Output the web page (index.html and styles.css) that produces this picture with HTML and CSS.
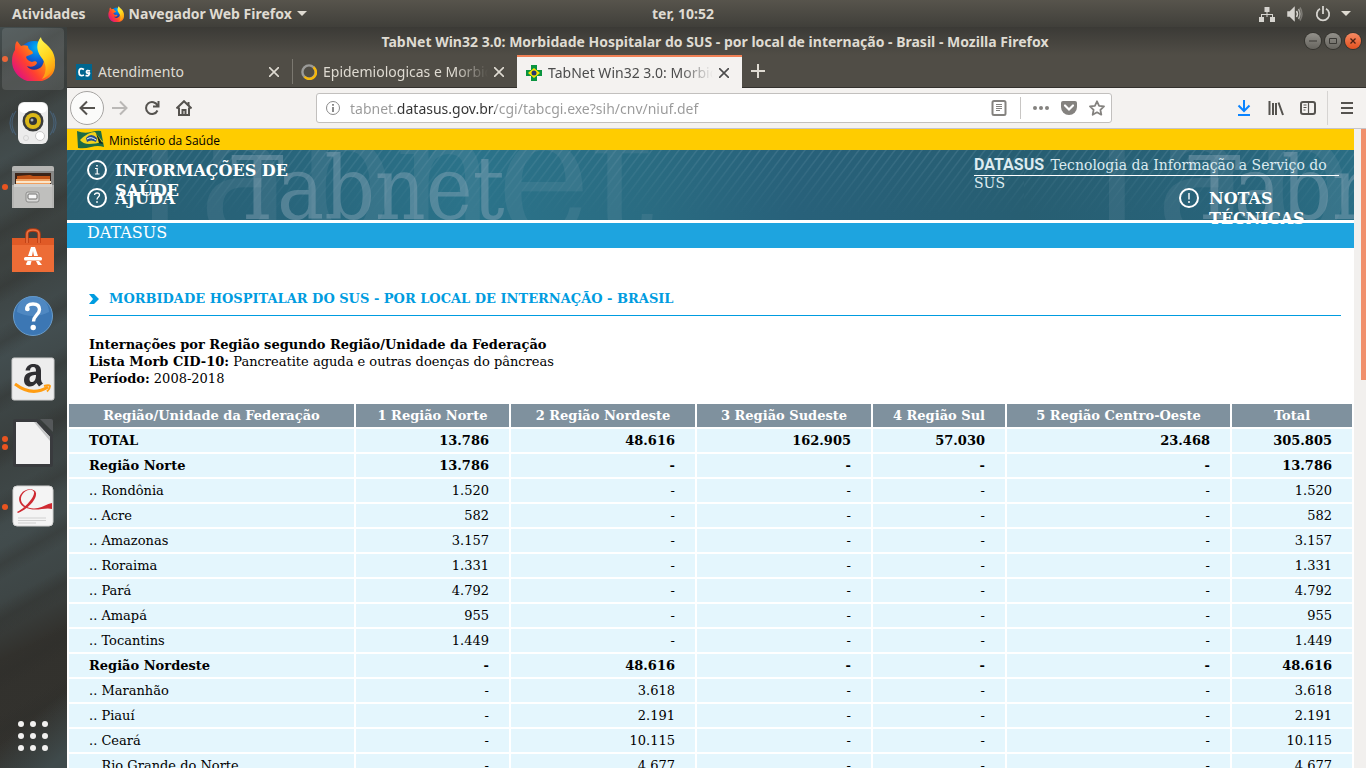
FILE: index.html
```html
<!DOCTYPE html>
<html lang="pt-BR">
<head>
<meta charset="utf-8">
<title>TabNet Win32 3.0: Morbidade Hospitalar do SUS</title>
<link rel="stylesheet" href="styles.css">
</head>
<body>
<svg class="defs" aria-hidden="true">
  <defs>
    <radialGradient id="fxBlue" cx=".6" cy=".2" r=".8"><stop offset="0" stop-color="#00b4f5"/><stop offset=".5" stop-color="#0a62d8"/><stop offset="1" stop-color="#26217c"/></radialGradient>
    <linearGradient id="fxBody" x1="1" y1=".1" x2=".1" y2=".8"><stop offset="0" stop-color="#ffe42e"/><stop offset=".35" stop-color="#ff9a0c"/><stop offset=".7" stop-color="#ff4030"/><stop offset="1" stop-color="#e2147c"/></linearGradient>
    <linearGradient id="fxTail" x1=".3" y1="0" x2=".7" y2="1"><stop offset="0" stop-color="#fff44f"/><stop offset=".5" stop-color="#ffd41c"/><stop offset="1" stop-color="#ff8a10"/></linearGradient>
    <symbol id="firefox" viewBox="0 0 44 44">
      <circle cx="23" cy="20" r="16" fill="url(#fxBlue)"/>
      <path d="M6 4c2 2 3 4 4 5 2-1 5-1 7 0 0 2 1 4 4 5l1 2c-1 2-5 2-7 4 1 3 3 4 6 5 2-1 5-1 5 1-1 3-6 5-10 3 3 5 11 5 15 0 3-5 2-9 0-13 6 2 13 4 13 12 0 11-9 17-21 17S1 36 1 24c0-5 1-8 3-11 0-4 0-7 2-9z" fill="url(#fxBody)"/>
      <path d="M30 0c0 6 13 9 14 23 0 9-5 16-13 19 6-8 4-16-1-22-5-7-5-14 0-20z" fill="url(#fxTail)"/>
    </symbol>
    <symbol id="close" viewBox="0 0 10 10"><path d="M0 0l10 10M10 0L0 10" fill="none" stroke="currentColor" stroke-width="1.6"/></symbol>
  </defs>
</svg>

<header class="topbar">
  <div class="topbar-left">
    <button type="button" class="bar-btn">Atividades</button>
    <button type="button" class="bar-btn"><svg class="i16" viewBox="0 0 44 44"><use href="#firefox"/></svg>Navegador Web Firefox <span class="caret"></span></button>
  </div>
  <button type="button" class="bar-btn clock">ter, 10:52</button>
  <button type="button" class="bar-btn tray" aria-label="Sistema">
    <svg class="i16" viewBox="0 0 16 16" fill="#d6d4cf"><path d="M5.500 1h5v5H8.500v2H14v3h2v5h-5v-5h2V9H8.500v2H7.500V9H3v2h2v5H0v-5h2V8h5.500V6h-2z"/></svg>
    <svg class="i16" viewBox="0 0 16 16" fill="none" stroke="#d6d4cf" stroke-width="1.500"><path d="M1 6h2l4-4v12l-4-4H1z" fill="#d6d4cf"/><path d="M9.500 5q2 3 0 6"/><path d="M11.500 3q3 5 0 10" opacity=".7"/><path d="M13 1.500q4 6.500 0 13" opacity=".35"/></svg>
    <svg class="i16" viewBox="0 0 16 16" fill="none" stroke="#d6d4cf" stroke-width="1.800"><path d="M5 2.700a6.200 6.200 0 1 0 6 0M8 0v8"/></svg>
    <span class="caret"></span>
  </button>
</header>

<div class="desktop">
  <nav class="dock" aria-label="Aplicativos">
    <button type="button" class="app active run" aria-label="Firefox"><svg viewBox="0 0 44 44" width="44" height="44"><use href="#firefox"/></svg></button>
    <button type="button" class="app" aria-label="Rhythmbox"><svg viewBox="0 0 48 48" width="48" height="48">
      <g fill="none" stroke="#4d7196" stroke-width="1.200" opacity=".55"><path d="M7 12q-8 12 0 24M4 14q-6 10 0 20M41 12q8 12 0 24M44 14q6 10 0 20"/></g>
      <rect x="9" y="3" width="30" height="42" rx="6" fill="#ececec"/><rect x="10" y="4" width="28" height="10" rx="5" fill="#fff"/>
      <circle cx="24" cy="22" r="10.500" fill="#3a3c3c"/><circle cx="24" cy="22" r="8" fill="#dcb818"/><circle cx="24" cy="22" r="4" fill="#303238"/><circle cx="23" cy="21" r="1.500" fill="#a9b1b8"/>
      <circle cx="31" cy="37" r="4.500" fill="#fff" stroke="#c9c9c9"/><circle cx="17" cy="39" r="2.500" fill="none" stroke="#d4d4d4"/></svg></button>
    <button type="button" class="app run" aria-label="Arquivos"><svg viewBox="0 0 48 48" width="48" height="48">
      <path d="M5 3h38q2 0 2 2v40H3V5q0-2 2-2z" fill="#b5b5b3"/><path d="M3 8h42v14H3z" fill="#888886"/><path d="M6 10h36v12H6z" fill="#3c2418"/><path d="M8 13l13-1 3 1h17v8H8z" fill="#c05316"/><path d="M7 16h34v6H7z" fill="#f0a060"/><path d="M7 18h35v2H7z" fill="#fbe5c8"/>
      <path d="M5 21h38v24H5z" fill="#bfbfbd"/><path d="M5 21h38v3H5z" fill="#d2d2d0"/><rect x="17" y="29" width="13" height="10" rx="2" fill="#d8d8d7" stroke="#8c8c8a"/><rect x="19" y="31" width="9" height="5" rx="1" fill="#f7f7f7" stroke="#6d6d6b"/></svg></button>
    <button type="button" class="app" aria-label="Programas"><svg viewBox="0 0 48 48" width="48" height="48">
      <path d="M3 11h42v34H3z" fill="#ed6c36"/><path d="M3 11h42v7H3z" fill="#e05a26"/><path d="M18 16V7q0-4 6-4t6 4v9" fill="none" stroke="#b83b12" stroke-width="3.500"/><path d="M18 16V7q0-4 6-4t6 4v9" fill="none" stroke="#ee7746" stroke-width="1.500"/>
      <path d="M22 20h4l3 9h-4l-1-5-1 5h-4zM17 37l1.500-3h4l-1 4h-4zM30 34l3 4h-4l-2-4z" fill="#fff"/><rect x="15" y="30" width="18" height="3.500" rx="1.500" fill="#fff"/></svg></button>
    <button type="button" class="app" aria-label="Ajuda"><svg viewBox="0 0 48 48" width="48" height="48">
      <circle cx="24" cy="25" r="19.500" fill="#3c77b4" stroke="#6b9dcb"/><path d="M8 21a16 16 0 0 1 32 0q-16 8-32 0z" fill="#5c94cc" opacity=".6"/><path d="M18 19q-1-6 6-6 6.500 0 6.500 5.500c0 5-6 6-6 12" fill="none" stroke="#fff" stroke-width="3.400"/><circle cx="18.500" cy="18" r="2.300" fill="#fff"/><circle cx="24.200" cy="36.500" r="2.700" fill="#fff"/></svg></button>
    <button type="button" class="app" aria-label="Amazon"><svg viewBox="0 0 48 48" width="48" height="48">
      <rect x="3" y="3" width="42" height="42" rx="2" fill="#ededed" stroke="#cfcfcf"/><path d="M16.500 15.500c1-5 4.500-6.500 8-6.500 4 0 7.500 2 7.500 6.500v9q0 2 2 4l-4 3-2.500-3.500c-5 6-12.500 4-12.500-3 0-7 6-8 12-8.500 0-3-.5-4.500-3-4.500-2 0-2.800 1.500-3 3.500zM27 20c-4 .2-6.500 1-6.500 4.500 0 4 6.500 4 6.500-4.500z" fill="#2f2f33"/><path d="M6 29q17 13 33 3" fill="none" stroke="#ff9d12" stroke-width="3"/><path d="M35 31q5-1.500 6 0-.2 3-3 5.500" fill="none" stroke="#ff9d12" stroke-width="2"/></svg></button>
    <button type="button" class="app run two" aria-label="LibreOffice"><svg viewBox="0 0 48 48" width="48" height="48">
      <path d="M6 0h22l16 16v30q0 2-2 2H6q-2 0-2-2V2q0-2 2-2z" fill="#393b3e"/><path d="M31 0h11q2 0 2 2v11z" fill="#55585a"/><path d="M7 3h20l14 15v27H7z" fill="#f2f2f2"/><path d="M27 3l14 15v4L25 3z" fill="#c4c5c6"/></svg></button>
    <button type="button" class="app run" aria-label="Visualizador de documentos"><svg viewBox="0 0 48 48" width="48" height="48">
      <rect x="4" y="3" width="40" height="40" rx="4" fill="#f4f4f4" stroke="#d2d2d2"/><path d="M8 29C16 25 26 14 25 9 23 4 13 8 12 15c-1 7 8 12 17 10 5-1 9-4 14-5v6c-6-2-14 2-22 0C10 24 8 16 12 11c4-6 14-6 15-1 1 6-8 16-18 20z" fill="#cf2a32"/><path d="M9 35h28M9 37.500h28M9 40h18" stroke="#d0d0d0"/></svg></button>
    <button type="button" class="app grid-btn" aria-label="Mostrar aplicativos"><svg viewBox="0 0 32 32" width="32" height="32" fill="#f2f1f0"><circle cx="4" cy="4" r="3"/><circle cx="16" cy="4" r="3"/><circle cx="28" cy="4" r="3"/><circle cx="4" cy="16" r="3"/><circle cx="16" cy="16" r="3"/><circle cx="28" cy="16" r="3"/><circle cx="4" cy="28" r="3"/><circle cx="16" cy="28" r="3"/><circle cx="28" cy="28" r="3"/></svg></button>
  </nav>

  <div class="window">
    <div class="titlebar">
      <span class="title">TabNet Win32 3.0: Morbidade Hospitalar do SUS - por local de internação - Brasil - Mozilla Firefox</span>
      <div class="win-btns">
        <button type="button" class="wb" aria-label="Minimizar"><svg viewBox="0 0 16 16"><path d="M4 8h8" stroke="#3a3935"/></svg></button>
        <button type="button" class="wb" aria-label="Maximizar"><svg viewBox="0 0 16 16"><path d="M4.500 5.500h7v5h-7z" fill="none" stroke="#3a3935"/></svg></button>
        <button type="button" class="wb wb-close" aria-label="Fechar"><svg viewBox="0 0 16 16"><path d="M5.500 5.500l5 5M10.500 5.500l-5 5" stroke="#4a2013" stroke-width="1.300"/></svg></button>
      </div>
    </div>

    <div class="tabs">
      <div class="tab"><svg class="i16" viewBox="0 0 16 16"><path d="M0 0h16v16H0z" fill="#00668f"/><path d="M8 5.500Q3 3 3 8t5 3M14 7q-3.500-1-3.500.8t2 1.200 0 2.500q-1 .5-3 0" fill="none" stroke="#fff" stroke-width="1.800"/></svg><span class="tab-text">Atendimento</span><button type="button" class="tab-x" aria-label="Fechar aba"><svg><use href="#close"/></svg></button></div>
      <div class="tab tab-mid"><svg class="i16" viewBox="0 0 16 16" fill="none" stroke-width="2.400"><circle cx="8" cy="8" r="6.600" stroke="#9a9a98"/><path d="M12.500 3.200A6.600 6.600 0 1 1 3.500 12.800" stroke="#f5b70a"/></svg><span class="tab-text fade">Epidemiologicas e Morbidade</span><button type="button" class="tab-x" aria-label="Fechar aba"><svg><use href="#close"/></svg></button></div>
      <div class="tab tab-on"><svg class="i16" viewBox="0 0 16 16"><path d="M5 0h6v5h5v6h-5v5H5v-5H0V5h5z" fill="#0a9440"/><path d="M8 3l6 5-6 5-6-5z" fill="#f9e300"/><circle cx="8" cy="8" r="2.500" fill="#27366d"/></svg><span class="tab-text fade">TabNet Win32 3.0: Morbidade</span><button type="button" class="tab-x" aria-label="Fechar aba"><svg><use href="#close"/></svg></button></div>
      <button type="button" class="new-tab" aria-label="Nova aba"><svg viewBox="0 0 14 14" width="14" height="14"><path d="M7 0v14M0 7h14" stroke="currentColor" stroke-width="2"/></svg></button>
    </div>

    <div class="toolbar">
      <div class="nav-btns">
        <button type="button" class="tb back" aria-label="Voltar"><svg viewBox="0 0 16 16"><path d="M16 8H1.500M8 1.500L1.500 8 8 14.500"/></svg></button>
        <button type="button" class="tb off" aria-label="Avançar"><svg viewBox="0 0 16 16"><path d="M0 8h14.500M8 1.500L14.500 8 8 14.500"/></svg></button>
        <button type="button" class="tb" aria-label="Recarregar"><svg viewBox="0 0 16 16"><path d="M13.500 10.500a6 6 0 1 1 0-5M14.500 1v5.500H9"/></svg></button>
        <button type="button" class="tb" aria-label="Página inicial"><svg viewBox="0 0 16 16"><path d="M.5 8.500L8 1.200l7.500 7.300M3 7.500V15h10V7.500" /><path d="M6.500 15v-5h3v5M12.500 2v4"/></svg></button>
      </div>
      <div class="urlbar">
        <svg class="i16 thin" viewBox="0 0 16 16"><circle cx="8" cy="8" r="6.500"/><path d="M8 7v5M8 4v1.800" stroke-width="2"/></svg>
        <input class="url" type="text" aria-label="Endereço" value="tabnet.datasus.gov.br/cgi/tabcgi.exe?sih/cnv/niuf.def">
        <button type="button" class="ub" aria-label="Modo de leitura"><svg viewBox="0 0 16 16"><rect x="1.500" y="1" width="13" height="14" rx="1.500" stroke-width="2"/><path d="M5 4.500h6M5 6.500h6M5 8.500h6M5 10.500h4" stroke-width="1"/></svg></button>
        <span class="sep"></span>
        <button type="button" class="ub" aria-label="Ações da página"><svg viewBox="0 0 16 16" class="solid"><circle cx="2" cy="8" r="2"/><circle cx="8" cy="8" r="2"/><circle cx="14" cy="8" r="2"/></svg></button>
        <button type="button" class="ub" aria-label="Salvar no Pocket"><svg viewBox="0 0 16 16"><path d="M2 1h12q2 0 2 2v4a8 8 0 0 1-16 0V3q0-2 2-2z" fill="currentColor" stroke="none"/><path d="M4 5.500l4 4 4-4" stroke="#fff" stroke-width="2.200" stroke-linecap="round"/></svg></button>
        <button type="button" class="ub" aria-label="Favoritar"><svg viewBox="0 0 16 16"><path d="M8 1.300l2.100 4.500 4.900.6-3.600 3.400.9 4.900L8 12.300l-4.300 2.400.9-4.900L1 6.400l4.900-.6z" stroke-width="1.800" stroke-linejoin="round"/></svg></button>
      </div>
      <div class="tools">
        <button type="button" class="tb dl" aria-label="Downloads"><svg viewBox="0 0 16 16"><path d="M8 0v10.500M2.500 5.500L8 11l5.500-5.500M2 15h12"/></svg></button>
        <button type="button" class="tb" aria-label="Biblioteca"><svg viewBox="0 0 16 16"><path d="M1.500 1v14M5 3v12M8 3v12M10.500 2.500L15 15"/></svg></button>
        <button type="button" class="tb" aria-label="Painel"><svg viewBox="0 0 16 16"><rect x="1" y="2" width="14" height="12" rx="2"/><path d="M8.500 2v12M3.500 5h3M3.500 7.500h3M3.500 10h2" stroke-width="1.200"/></svg></button>
        <span class="sep tall"></span>
        <button type="button" class="tb" aria-label="Menu"><svg viewBox="0 0 16 16"><path d="M2 3h12M2 8h12M2 13h12"/></svg></button>
      </div>
    </div>

    <div class="viewport">
      <main class="page">
        <div class="gov">
          <svg viewBox="0 0 28 20" width="28" height="20"><path d="M0 1q7 3 14 1t10-1l3 16q-6-2-13 0T1 18z" fill="#1c6b45"/><path d="M3 10q8-8 15-8l8 10q-8 2-14 2-6 0-9-4z" fill="#f3d31d"/><path d="M9 8q5-6 11 0l-1 4q-5-3-9 0z" fill="#244b8e"/><path d="M10 9q4-3 9 1" fill="none" stroke="#fff"/><path d="M19 3l7 11-4-1z" fill="#15251c"/></svg>
          <span>Ministério da Saúde</span>
        </div>
        <div class="banner">
          <svg class="banner-bg" aria-hidden="true">
            <defs>
              <linearGradient id="sea"><stop offset="0" stop-color="#275e72"/><stop offset=".2" stop-color="#286379"/><stop offset=".42" stop-color="#2b738a"/><stop offset=".6" stop-color="#2a6c82"/><stop offset=".76" stop-color="#28617a"/><stop offset="1" stop-color="#275e72"/></linearGradient>
              <linearGradient id="fadeDown" x2="0" y2="1"><stop offset="0" stop-color="#fff"/><stop offset=".9" stop-color="#000"/></linearGradient>
              <pattern id="stripes" width="9" height="12" patternUnits="userSpaceOnUse"><path d="M-1 13.330L10-1.330M-10 13.330L1-1.330M8 13.330L19-1.330" stroke="#7aa5b4" stroke-opacity=".22" stroke-width="1.500"/></pattern>
              <mask id="fadeMask"><rect width="960" height="70" fill="url(#fadeDown)"/></mask>
              <pattern id="sheet" width="957" height="70" patternUnits="userSpaceOnUse">
                <rect width="960" height="70" fill="url(#sea)"/>
                <rect width="960" height="70" fill="url(#stripes)" mask="url(#fadeMask)"/>
                <text class="mark mark-big" x="40" y="86">Tabnet</text>
                <text class="mark" x="164" y="69">Tabnet</text>
              </pattern>
            </defs>
            <rect width="100%" height="70" fill="url(#sheet)"/>
          </svg>
          <ul class="links">
            <li><svg class="ring" viewBox="0 0 20 20"><circle cx="10" cy="10" r="9"/><path d="M8 8.500h2.200V14M8 14h4.500" stroke-width="1.200"/><path d="M10 5v1.600" stroke-width="1.600"/></svg><a href="#">INFORMAÇÕES DE SAÚDE</a></li>
            <li><svg class="ring" viewBox="0 0 20 20"><circle cx="10" cy="10" r="9"/><path d="M7.500 7q.3-2 2.600-2 2.400 0 2.400 2.100c0 2-2.500 2-2.500 4.400M10 13v2" stroke-width="1.300"/></svg><a href="#">AJUDA</a></li>
          </ul>
          <div class="agency">
            <p class="tagline"><strong>DATASUS</strong> Tecnologia da Informação a Serviço do SUS</p>
            <div class="notes"><svg class="ring" viewBox="0 0 20 20"><circle cx="10" cy="10" r="9"/><path d="M10 5v6.500M10 13v2" stroke-width="1.400"/></svg><a href="#">NOTAS TÉCNICAS</a></div>
          </div>
        </div>
        <div class="crumb"><a href="#">DATASUS</a></div>

        <h1><svg viewBox="0 0 10 10" width="10" height="10"><path d="M0 0h5l5 5-5 5H0l4-5z" fill="#009ce0"/></svg>MORBIDADE HOSPITALAR DO SUS - POR LOCAL DE INTERNAÇÃO - BRASIL</h1>
        <p class="info"><b>Internações por Região segundo Região/Unidade da Federação</b><br><b>Lista Morb CID-10:</b> Pancreatite aguda e outras doenças do pâncreas<br><b>Período:</b> 2008-2018</p>

        <table>
          <colgroup><col class="c1"><col class="c2"><col class="c3"><col class="c4"><col class="c5"><col class="c6"><col class="c7"></colgroup>
          <thead><tr><th>Região/Unidade da Federação</th><th>1 Região Norte</th><th>2 Região Nordeste</th><th>3 Região Sudeste</th><th>4 Região Sul</th><th>5 Região Centro-Oeste</th><th>Total</th></tr></thead>
          <tbody>
            <tr class="sum"><td>TOTAL</td><td>13.786</td><td>48.616</td><td>162.905</td><td>57.030</td><td>23.468</td><td>305.805</td></tr>
            <tr class="sum"><td>Região Norte</td><td>13.786</td><td>-</td><td>-</td><td>-</td><td>-</td><td>13.786</td></tr>
            <tr><td>.. Rondônia</td><td>1.520</td><td>-</td><td>-</td><td>-</td><td>-</td><td>1.520</td></tr>
            <tr><td>.. Acre</td><td>582</td><td>-</td><td>-</td><td>-</td><td>-</td><td>582</td></tr>
            <tr><td>.. Amazonas</td><td>3.157</td><td>-</td><td>-</td><td>-</td><td>-</td><td>3.157</td></tr>
            <tr><td>.. Roraima</td><td>1.331</td><td>-</td><td>-</td><td>-</td><td>-</td><td>1.331</td></tr>
            <tr><td>.. Pará</td><td>4.792</td><td>-</td><td>-</td><td>-</td><td>-</td><td>4.792</td></tr>
            <tr><td>.. Amapá</td><td>955</td><td>-</td><td>-</td><td>-</td><td>-</td><td>955</td></tr>
            <tr><td>.. Tocantins</td><td>1.449</td><td>-</td><td>-</td><td>-</td><td>-</td><td>1.449</td></tr>
            <tr class="sum"><td>Região Nordeste</td><td>-</td><td>48.616</td><td>-</td><td>-</td><td>-</td><td>48.616</td></tr>
            <tr><td>.. Maranhão</td><td>-</td><td>3.618</td><td>-</td><td>-</td><td>-</td><td>3.618</td></tr>
            <tr><td>.. Piauí</td><td>-</td><td>2.191</td><td>-</td><td>-</td><td>-</td><td>2.191</td></tr>
            <tr><td>.. Ceará</td><td>-</td><td>10.115</td><td>-</td><td>-</td><td>-</td><td>10.115</td></tr>
            <tr><td>.. Rio Grande do Norte</td><td>-</td><td>4.677</td><td>-</td><td>-</td><td>-</td><td>4.677</td></tr>
          </tbody>
        </table>
      </main>
      <div class="scroll"><div class="thumb"></div></div>
    </div>
  </div>
</div>
</body>
</html>
```
FILE: styles.css
```css
* { box-sizing: border-box; }
html, body { height: 100%; }
body { margin: 0; display: flex; flex-direction: column; overflow: hidden; background: #33322e; font-family: "Noto Sans", sans-serif; font-size: 14px; }
button { border: 0; padding: 0; margin: 0; background: none; color: inherit; font: inherit; }
a { color: inherit; text-decoration: none; }
.defs { position: absolute; width: 0; height: 0; }
.i16 { width: 16px; height: 16px; flex: none; }

.topbar { flex: none; height: 27px; display: grid; grid-template-columns: 1fr auto 1fr; align-items: center; padding: 0 12px; background: linear-gradient(#57544c, #403f3a); color: #dfdbd2; font-weight: 700; font-size: 14px; line-height: 20px; }
.topbar-left { display: flex; gap: 22px; }
.bar-btn { display: flex; align-items: center; gap: 5px; white-space: nowrap; }
.tray { justify-self: end; gap: 12px; margin-right: 3px; }
.caret { border: 5px solid transparent; border-top-color: #dfdbd2; border-bottom: 0; }
.tray .caret { margin-left: -2px; }

.desktop { flex: 1; min-height: 0; display: flex; }
.dock { position: relative; flex: none; width: 67px; display: flex; flex-direction: column; padding-bottom: 15px;
  background: linear-gradient(140deg, transparent 90%, #3f4a4b 98%), repeating-linear-gradient(150deg, #2d2d2a00 0 20px, #2d2d2a55 34px, #2d2d2a00 48px), linear-gradient(155deg, #444e4f 0, #3c403e 8%, #434d4e 18%, #3b403e 30%, #434e50 42%, #3a403f 54%, #424c4d 66%, #3e4646 74%, #32312d 82%, #33322e 100%); }
.app { position: relative; flex: none; width: 66px; height: 64px; display: flex; align-items: center; justify-content: center; }
.active::after { content: ""; position: absolute; inset: 1px 2px; border-radius: 4px; background: #ffffff1c; }
.active svg { position: relative; z-index: 1; }
.run::before { content: ""; position: absolute; left: 2px; width: 6px; height: 6px; border-radius: 50%; background: #e95420; }
.two::before { box-shadow: 0 8px 0 #e95420; margin-top: -8px; }
.grid-btn { margin-top: auto; height: 34px; }

.window { flex: 1; min-width: 0; display: flex; flex-direction: column; }
.titlebar { flex: none; height: 28px; display: flex; align-items: center; padding: 0 5px 0 58px; background: linear-gradient(#3b3a36, #504d46); color: #dfdbd2; font-weight: 700; font-size: 14px; }
.title { flex: 1; text-align: center; white-space: nowrap; }
.win-btns { display: flex; gap: 4px; }
.wb { width: 16px; height: 16px; display: flex; border-radius: 50%; background: linear-gradient(#93918b, #66645e); box-shadow: 0 0 0 1px #35342f; }
.wb-close { background: linear-gradient(#f58a63, #e4511f); }

.tabs { flex: none; height: 33px; display: flex; background: #504d46; border-bottom: 1px solid #33312d; color: #dfdbd2; }
.tab { width: 225px; display: flex; align-items: center; gap: 6px; padding: 1px 13px 0 9px; }
.tab-mid { border-left: 1px solid transparent; border-image: linear-gradient(transparent 15%, #7b7870 15% 88%, transparent 88%) 1; padding-left: 8px; }
.tab-on { height: 33px; background: #f4f2f0; color: #4c4c4c; border-top: 2px solid #f08055; padding-top: 0; }
.tab-text { flex: 1; overflow: hidden; white-space: nowrap; line-height: 20px; }
.fade { -webkit-mask-image: linear-gradient(90deg, #000 80%, transparent); mask-image: linear-gradient(90deg, #000 80%, transparent); }
.tab-x { display: flex; }
.tab-x svg { width: 10px; height: 10px; }
.new-tab { padding: 0 9px; display: flex; align-items: center; }

.toolbar { flex: none; height: 41px; display: flex; align-items: center; padding: 0 3px; background: #f4f2f0; border-bottom: 1px solid #c6c4c8; color: #55534f; }
.nav-btns { display: flex; align-items: center; }
.tb { width: 32px; height: 34px; display: flex; align-items: center; justify-content: center; }
.tb svg, .ub svg, .thin { width: 16px; height: 16px; fill: none; stroke: currentColor; stroke-width: 2; }
.thin { stroke-width: 1; color: #8a8a8a; }
.ub .solid { fill: currentColor; stroke: none; }
.back { width: 34px; border: 1px solid #a6a4a2; border-radius: 50%; background: #fbfbfa; }
.off { color: #bab8b6; }
.urlbar { flex: 1; height: 30px; margin: 0 116px; display: flex; align-items: center; gap: 12px; padding: 0 6px 0 8px; background: #fff; border: 1px solid #c2c0be; border-radius: 3px; color: #84827f; }
.url { flex: 1; min-width: 0; margin-left: -3px; padding: 0; border: 0; outline: 0; font: inherit; color: transparent; background: linear-gradient(90deg, #999 47px, #333 47px 145px, #999 145px); -webkit-background-clip: text; background-clip: text; }
.ub { display: flex; }
.sep { width: 1px; height: 22px; background: #c8c6c4; margin: 0 0 0 1px; }
.tall { height: 34px; margin: 0 3px; background: #d6d4d2; }
.tools { display: flex; align-items: center; }
.dl { color: #0a84ff; }

.viewport { flex: 1; min-height: 0; display: flex; background: #fff; font-family: "DejaVu Serif", serif; }
.page { flex: 1; min-width: 0; overflow: hidden; background: #fff; color: #000; }
.scroll { width: 12px; padding-left: 7px; background: #f2f0ee; }
.thumb { height: 251px; background: #f0906c; }

.gov { height: 21px; display: flex; align-items: center; gap: 4px; padding-left: 10px; background: #fc0; font: 12px "Open Sans", sans-serif; }
.gov span { padding-top: 2px; }
.banner { position: relative; z-index: 1; height: 70px; display: flex; justify-content: space-between; background: #275e72; color: #fff; }
.banner-bg { position: absolute; inset: 0; width: 100%; height: 70px; }
.mark { font: 88px "DejaVu Serif Condensed", "DejaVu Serif", serif; fill: #8fa9ba; fill-opacity: .42; }
.mark-big { font-size: 176px; fill-opacity: .13; }
.ring { width: 20px; height: 20px; flex: none; fill: none; stroke: #fff; stroke-width: 2; }
.links { position: relative; width: 240px; margin: 0; padding: 10px 0 0 20px; list-style: none; }
.links li { height: 28px; display: flex; gap: 8px; font-weight: 700; font-size: 16px; line-height: 20px; }
.links a, .notes a { height: 20px; padding-top: 1px; }
.agency { position: relative; width: 365px; margin-right: 15px; }
.tagline { margin: 6px 0 0; height: 20px; border-bottom: 1px solid #fff; font-size: 14px; line-height: 18px; color: #dcebf0; }
.tagline strong { margin-right: 2px; font: 700 16px/18px Roboto, sans-serif; }
.notes { display: flex; gap: 10px; width: 160px; height: 20px; margin: 12px 0 0 205px; font-weight: 700; font-size: 16px; line-height: 20px; }
.crumb { height: 28px; padding-left: 20px; border-top: 3px solid #fff; background: #1ea4df; color: #fff; font-size: 16px; line-height: 19px; }
h1 { display: flex; align-items: center; gap: 10px; margin: 43px 13px 0 22px; padding-bottom: 8px; border-bottom: 1px solid #009ce0; color: #009ce0; font-size: 13px; line-height: 16px; }
.info { margin: 20px 22px 15px; font-size: 13px; line-height: 17px; }
table { width: 100%; table-layout: fixed; border-spacing: 2px; font-size: 13px; line-height: 15px; }
.c1 { width: 285px; } .c2 { width: 153px; } .c3 { width: 184px; } .c4 { width: 174px; } .c5 { width: 132px; } .c6 { width: 223px; } .c7 { width: 120px; }
th { padding: 4px 0; background: #7f919e; color: #fff; }
td { padding: 4px 20px; background: #e4f6fd; text-align: right; white-space: nowrap; }
td:first-child { text-align: left; }
.sum { font-weight: 700; }
```
